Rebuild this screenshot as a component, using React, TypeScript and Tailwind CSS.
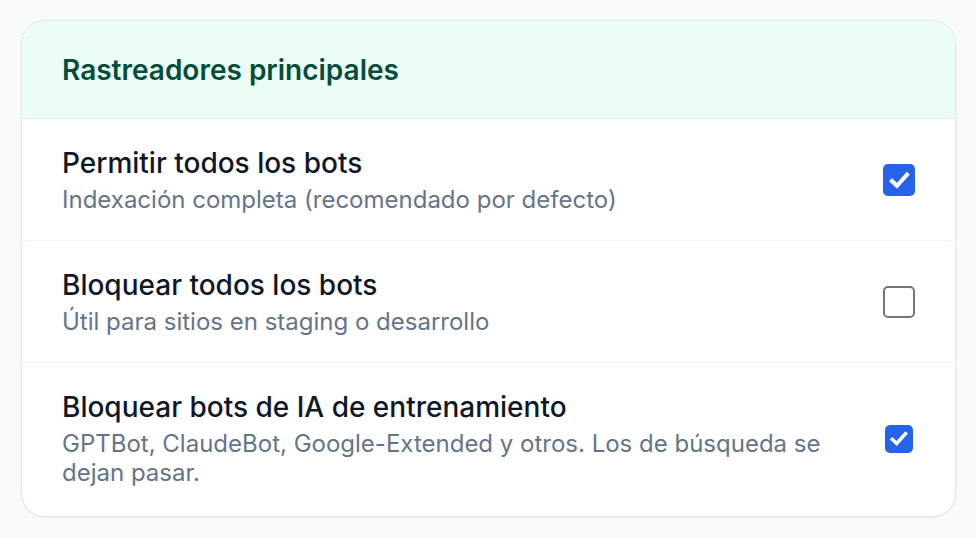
import React from "react";

type Option = {
  id: string;
  title: string;
  description: string;
  checked: boolean;
  small?: boolean;
};

const options: Option[] = [
  {
    id: "allow-all",
    title: "Permitir todos los bots",
    description: "Indexación completa (recomendado por defecto)",
    checked: true,
  },
  {
    id: "block-all",
    title: "Bloquear todos los bots",
    description: "Útil para sitios en staging o desarrollo",
    checked: false,
  },
  {
    id: "block-ai",
    title: "Bloquear bots de IA de entrenamiento",
    description:
      "GPTBot, ClaudeBot, Google-Extended y otros. Los de búsqueda se dejan pasar.",
    checked: true,
    small: true,
  },
];

const Checkbox = ({ checked, small }: { checked: boolean; small?: boolean }) => {
  const size = small ? "w-[28px] h-[28px]" : "w-[32px] h-[32px]";
  return (
    <div className="w-8 shrink-0 flex justify-center">
      {checked ? (
        <div
          className={`${size} rounded-[5px] bg-[#2563eb] flex items-center justify-center`}
        >
          <svg viewBox="0 0 16 16" className="w-[78%] h-[78%]">
            <path
              d="M3.2 8.4 L6.4 11.4 L12.8 4.2"
              fill="none"
              stroke="#ffffff"
              strokeWidth="2.6"
              strokeLinecap="square"
            />
          </svg>
        </div>
      ) : (
        <div
          className={`${size} rounded-[5px] border-2 border-[#767676] bg-white`}
        />
      )}
    </div>
  );
};

const App = () => {
  const [state, setState] = React.useState(options);

  const toggle = (id: string) => {
    setState((prev) =>
      prev.map((o) => (o.id === id ? { ...o, checked: !o.checked } : o))
    );
  };

  return (
    <div
      className="min-h-screen bg-[#f8fafc] px-[21px] pt-[20px] pb-5"
      style={{ fontFamily: "Inter, 'Noto Sans', sans-serif" }}
    >
      <section className="w-[935px] rounded-[24px] border border-[#e2e8f0] bg-white overflow-hidden shadow-[0_1px_3px_rgba(15,23,42,0.06)]">
        <header className="bg-[#ecfdf5] border-b border-[#d1fae5] px-10 pt-8 pb-[31px]">
          <h2 className="text-[28px] leading-[34px] font-semibold text-[#064e3b]">
            Rastreadores principales
          </h2>
        </header>
        <div>
          {state.map((item, i) => (
            <div
              key={item.id}
              onClick={() => toggle(item.id)}
              className={`flex items-center justify-between gap-14 px-10 pt-[27px] ${
                i > 0 ? "border-t border-[#f1f5f9]" : ""
              } ${i === state.length - 1 ? "pb-[29px]" : "pb-[26px]"}`}
            >
              <div className="flex flex-col gap-[5px]">
                <p className="text-[28px] leading-[34px] font-medium text-[#0f172a]">
                  {item.title}
                </p>
                <p className="text-[24px] leading-[29px] text-[#64748b]">
                  {item.description}
                </p>
              </div>
              <Checkbox checked={item.checked} small={item.small} />
            </div>
          ))}
        </div>
      </section>
    </div>
  );
};

export default App;
